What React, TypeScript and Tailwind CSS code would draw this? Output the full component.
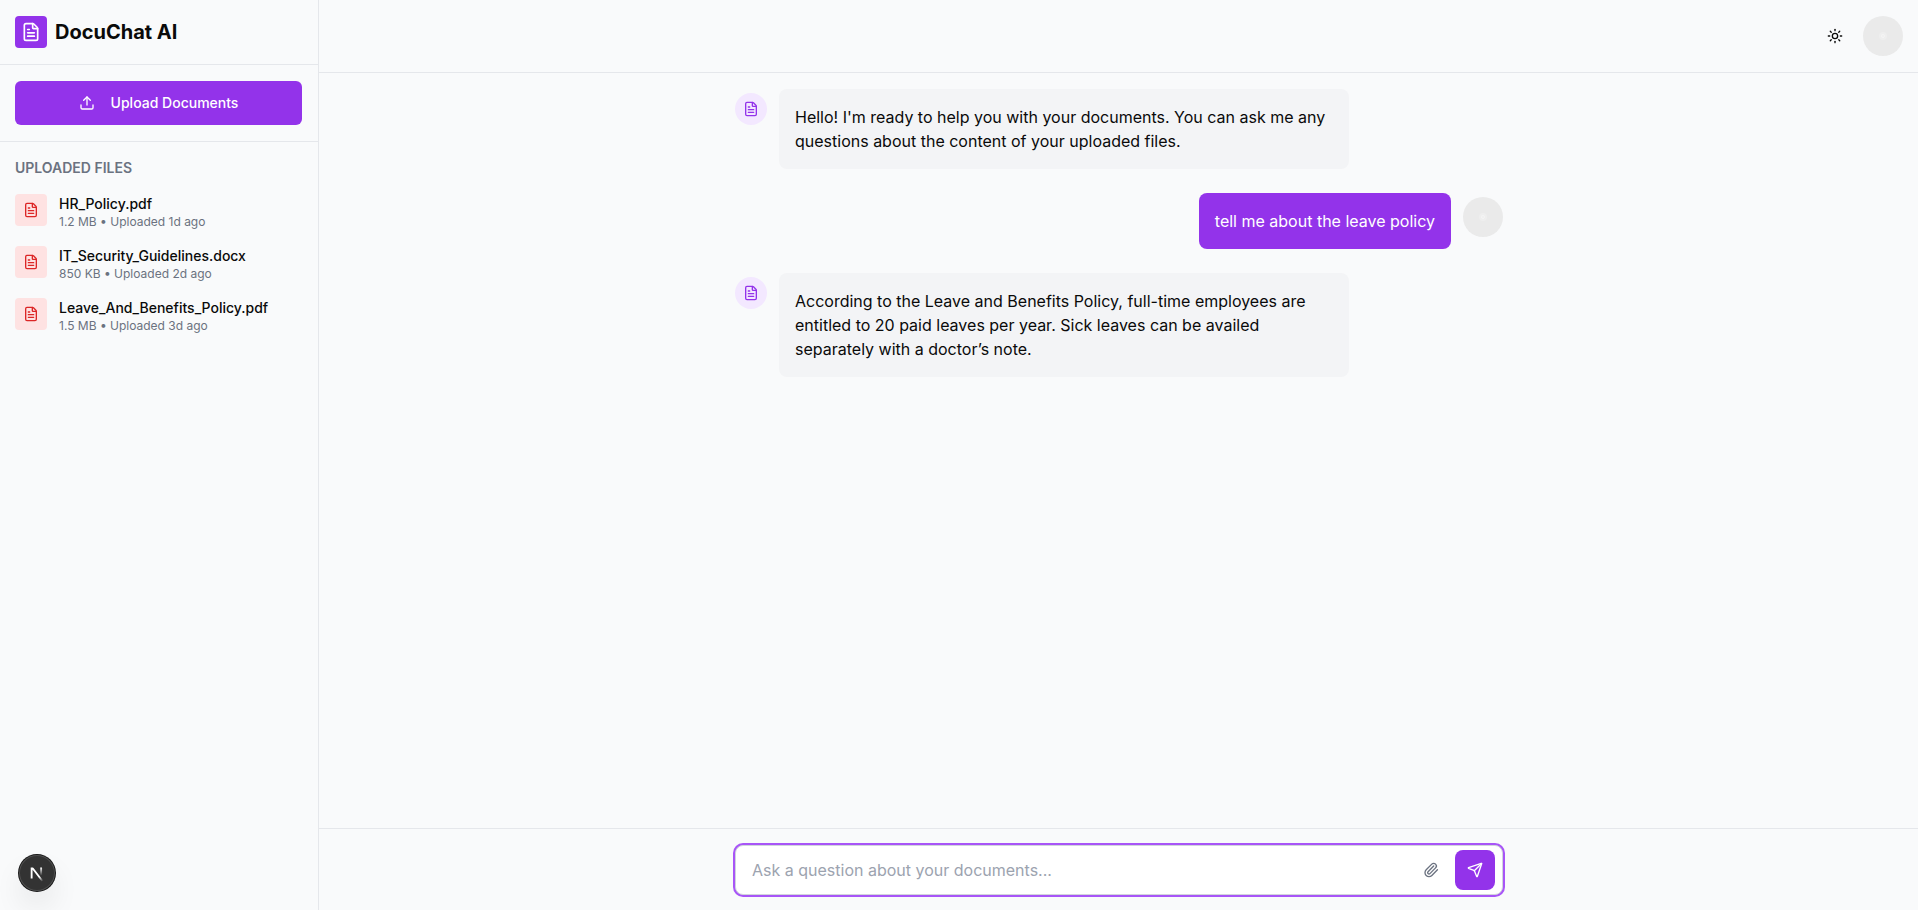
import { FileText, Upload, Sun, Paperclip, Send } from "lucide-react";

const files = [
  { name: "HR_Policy.pdf", meta: "1.2 MB • Uploaded 1d ago" },
  { name: "IT_Security_Guidelines.docx", meta: "850 KB • Uploaded 2d ago" },
  { name: "Leave_And_Benefits_Policy.pdf", meta: "1.5 MB • Uploaded 3d ago" },
];

const messages = [
  {
    from: "bot",
    text: "Hello! I'm ready to help you with your documents. You can ask me any questions about the content of your uploaded files.",
  },
  { from: "user", text: "tell me about the leave policy" },
  {
    from: "bot",
    text: "According to the Leave and Benefits Policy, full-time employees are entitled to 20 paid leaves per year. Sick leaves can be availed separately with a doctor’s note.",
  },
];

function Avatar() {
  return (
    <svg className="size-10 shrink-0" viewBox="0 0 40 40" role="img" aria-label="User">
      <circle cx="20" cy="20" r="20" fill="#eaeaea" />
      <circle cx="20" cy="20" r="4" fill="#eeeeee" />
      <circle cx="20" cy="20" r="1.5" fill="none" stroke="#f6f6f6" strokeWidth="0.8" />
    </svg>
  );
}

function Sidebar() {
  return (
    <aside className="flex w-80 shrink-0 flex-col border-r border-gray-200">
      <div className="flex items-center gap-2 border-b border-gray-200 p-4">
        <div className="flex size-8 items-center justify-center rounded bg-[#9333ea] text-white">
          <FileText className="size-5" />
        </div>
        <h1 className="text-xl leading-8 font-bold">DocuChat AI</h1>
      </div>
      <div className="border-b border-gray-200 p-4">
        <button
          type="button"
          className="flex h-11 w-full items-center justify-center gap-4 rounded-md bg-[#9333ea] text-sm font-medium text-white"
        >
          <Upload className="size-4" />
          Upload Documents
        </button>
      </div>
      <div className="flex flex-col gap-4 p-4">
        <h2 className="text-sm font-semibold text-[#6b7280] uppercase">Uploaded Files</h2>
        <ul className="flex flex-col gap-4">
          {files.map((file) => (
            <li key={file.name} className="flex items-start gap-3">
              <div className="flex size-8 items-center justify-center rounded bg-[#fee2e2] text-[#dc2626]">
                <FileText className="size-4" />
              </div>
              <div>
                <p className="text-sm font-medium">{file.name}</p>
                <p className="text-xs text-[#6b7280]">{file.meta}</p>
              </div>
            </li>
          ))}
        </ul>
      </div>
    </aside>
  );
}

function DevBadge() {
  return (
    <button
      type="button"
      aria-label="Open Next.js Dev Tools"
      className="fixed bottom-[19px] left-[19px] flex size-9 items-center justify-center rounded-full bg-[#333333] shadow-[0_0_0_1px_#171717,inset_0_0_0_1px_rgba(255,255,255,0.14),0_16px_32px_-8px_rgba(0,0,0,0.24)]"
    >
      <svg className="size-10 shrink-0" viewBox="0 0 40 40" fill="none">
        <g transform="translate(12.3 13)">
          <path
            d="M13.3 15.2 L2.34 1 V12.6"
            stroke="url(#diagonal)"
            strokeWidth="1.86"
            mask="url(#corner)"
          />
          <path d="M11.825 1.5 V13.1" stroke="url(#stem)" strokeWidth="1.86" />
        </g>
        <defs>
          <linearGradient id="diagonal" x1="9.95" y1="11.12" x2="15.48" y2="17.97" gradientUnits="userSpaceOnUse">
            <stop stopColor="white" />
            <stop offset="0.6" stopColor="white" stopOpacity="0" />
          </linearGradient>
          <linearGradient id="stem" x1="11.82" y1="1.4" x2="11.79" y2="9.63" gradientUnits="userSpaceOnUse">
            <stop stopColor="white" />
            <stop offset="1" stopColor="white" stopOpacity="0" />
          </linearGradient>
          <mask id="corner" maskUnits="userSpaceOnUse" x="0" y="0" width="20" height="20">
            <rect width="20" height="20" fill="white" />
            <rect width="5" height="1.5" fill="black" />
          </mask>
        </defs>
      </svg>
    </button>
  );
}

export default function App() {
  return (
    <div className="h-screen overflow-hidden bg-[#f9fafb] font-[Inter,sans-serif] text-[#0a0a0a]">
      <div className="-mx-px flex h-full">
        <Sidebar />
        <main className="flex min-w-0 flex-1 flex-col">
          <header className="flex items-center justify-end gap-2 border-b border-gray-200 p-4">
            <button type="button" aria-label="Toggle theme" className="flex size-10 items-center justify-center">
              <Sun className="size-4" />
            </button>
            <Avatar />
          </header>
          <section className="min-h-0 flex-1 overflow-hidden p-4">
            <div className="mx-auto flex max-w-3xl flex-col gap-6">
              {messages.map((message) =>
                message.from === "bot" ? (
                  <div key={message.text} className="flex max-w-4/5 items-start gap-3 self-start">
                    <div className="mt-1 flex size-8 shrink-0 items-center justify-center rounded-full bg-[#f3e8ff] text-[#9333ea]">
                      <FileText className="size-4" />
                    </div>
                    <p className="rounded-lg bg-[#f3f4f6] p-4">{message.text}</p>
                  </div>
                ) : (
                  <div key={message.text} className="flex max-w-4/5 items-start gap-3 self-end">
                    <p className="rounded-lg bg-[#9333ea] p-4 text-white">{message.text}</p>
                    <div className="mt-1">
                      <Avatar />
                    </div>
                  </div>
                ),
              )}
            </div>
          </section>
          <footer className="border-t border-gray-200 px-4 pt-4 pb-[15px]">
            <form className="mx-auto flex h-[50px] max-w-3xl items-center gap-1 rounded-lg border border-gray-300 bg-white pr-[7px] ring-2 ring-[#a855f7]">
              <input
                type="text"
                aria-label="Question"
                placeholder="Ask a question about your documents..."
                className="h-full min-w-0 flex-1 bg-transparent pl-4 text-base outline-none placeholder:text-[#9ca3af]"
              />
              <button
                type="button"
                aria-label="Attach file"
                className="flex size-10 items-center justify-center text-[#6b7280]"
              >
                <Paperclip className="size-4" />
              </button>
              <button
                type="button"
                aria-label="Send"
                className="flex size-10 items-center justify-center rounded-lg bg-[#9333ea] text-white"
              >
                <Send className="size-4" />
              </button>
            </form>
          </footer>
        </main>
      </div>
      <DevBadge />
    </div>
  );
}
